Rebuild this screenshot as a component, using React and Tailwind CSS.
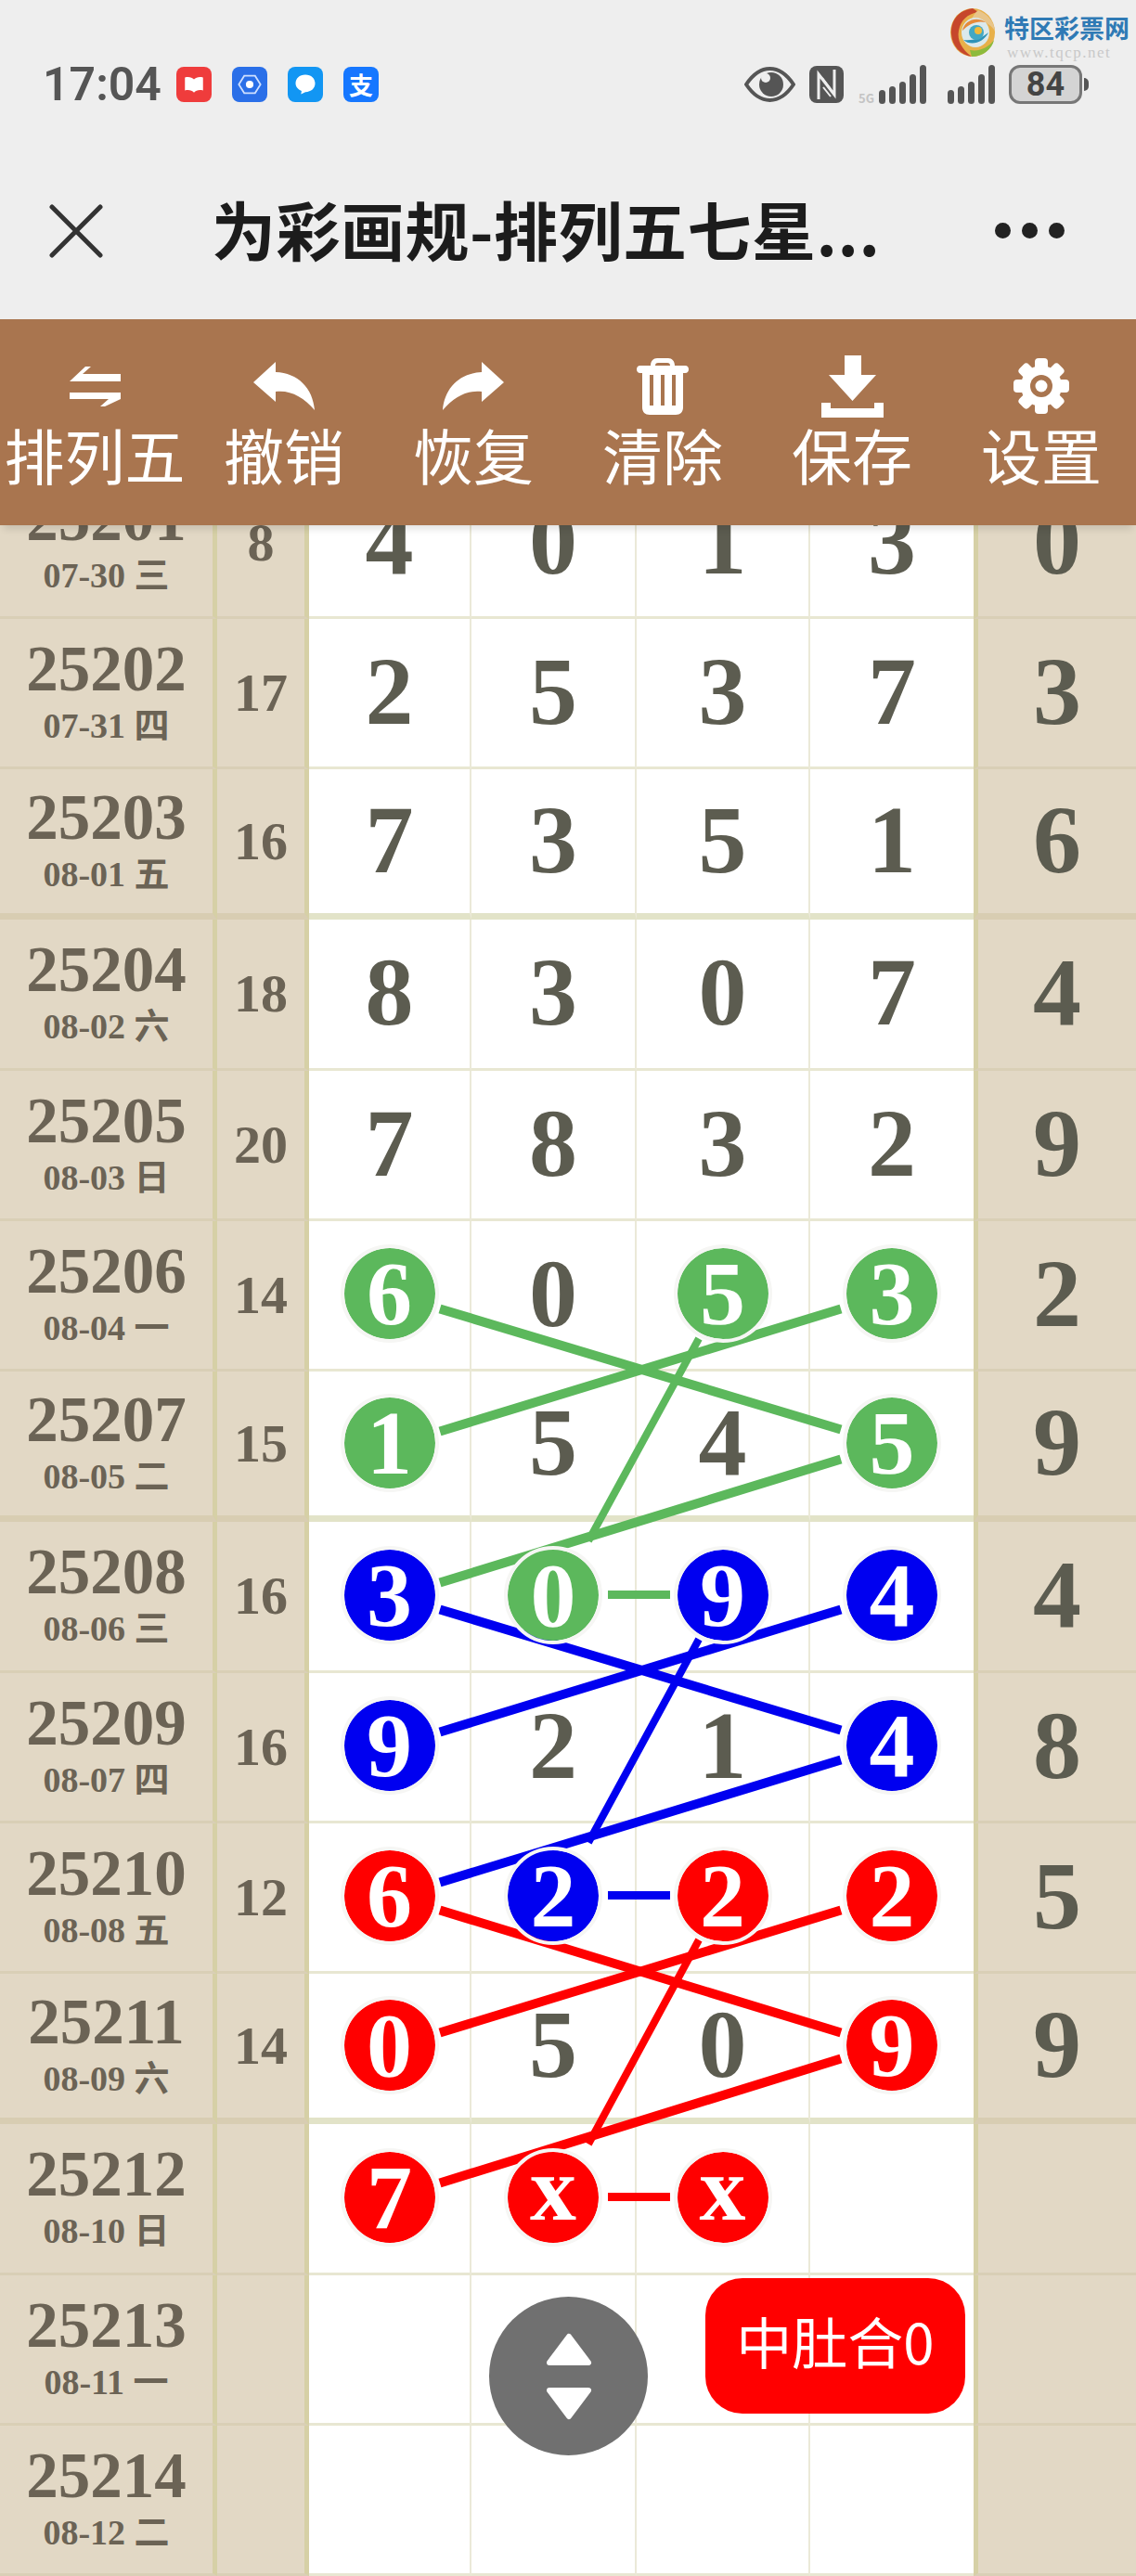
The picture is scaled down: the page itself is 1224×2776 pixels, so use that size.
import React from "react";

const ROWS = [
  { id: "25201", date: "07-30 三", sum: "8", nums: ["4", "0", "1", "3"], last: "0" },
  { id: "25202", date: "07-31 四", sum: "17", nums: ["2", "5", "3", "7"], last: "3" },
  { id: "25203", date: "08-01 五", sum: "16", nums: ["7", "3", "5", "1"], last: "6", thick: true },
  { id: "25204", date: "08-02 六", sum: "18", nums: ["8", "3", "0", "7"], last: "4" },
  { id: "25205", date: "08-03 日", sum: "20", nums: ["7", "8", "3", "2"], last: "9" },
  { id: "25206", date: "08-04 一", sum: "14", nums: ["6g", "0", "5g", "3g"], last: "2" },
  { id: "25207", date: "08-05 二", sum: "15", nums: ["1g", "5", "4", "5g"], last: "9", thick: true },
  { id: "25208", date: "08-06 三", sum: "16", nums: ["3b", "0g", "9b", "4b"], last: "4" },
  { id: "25209", date: "08-07 四", sum: "16", nums: ["9b", "2", "1", "4b"], last: "8" },
  { id: "25210", date: "08-08 五", sum: "12", nums: ["6r", "2b", "2r", "2r"], last: "5" },
  { id: "25211", date: "08-09 六", sum: "14", nums: ["0r", "5", "0", "9r"], last: "9", thick: true },
  { id: "25212", date: "08-10 日", sum: "", nums: ["7r", "xr", "xr", ""], last: "" },
  { id: "25213", date: "08-11 一", sum: "", nums: ["", "", "", ""], last: "" },
  { id: "25214", date: "08-12 二", sum: "", nums: ["", "", "", ""], last: "" },
];

const CIRCLE = { g: "bg-[#5cb85c]", b: "bg-[#0000f0]", r: "bg-[#ff0000]" };

// Line segments of the trend diagram, in page coordinates; the svg's viewBox starts at the table top.
const T = 504.5;
const LINES = [
  ["#5cb85c", 474, 1410, 906, 1540, 10],
  ["#5cb85c", 474, 1542, 906, 1410, 10],
  ["#5cb85c", 753, 1442, 634, 1660, 8],
  ["#5cb85c", 906, 1572, 474, 1705, 10],
  ["#5cb85c", 655, 1718, 722, 1718, 9],
  ["#0000f0", 474, 1734, 906, 1864, 10],
  ["#0000f0", 474, 1866, 906, 1734, 10],
  ["#0000f0", 753, 1766, 634, 1985, 8],
  ["#0000f0", 906, 1896, 474, 2028, 10],
  ["#0000f0", 655, 2042, 722, 2042, 9],
  ["#ff0000", 474, 2058, 906, 2190, 10],
  ["#ff0000", 474, 2190, 906, 2058, 10],
  ["#ff0000", 753, 2090, 634, 2310, 8],
  ["#ff0000", 906, 2218, 474, 2352, 10],
  ["#ff0000", 655, 2367, 722, 2367, 9],
];

function Cell({ v, className }) {
  const color = v.length > 1 ? v[1] : null;
  const ch = v[0] || "";
  return (
    <div className={`flex items-center justify-center h-full min-w-0 ${className}`}>
      {color ? (
        <div
          className={`relative z-10 -mt-[2px] flex h-[106px] w-[106px] items-center justify-center rounded-full border-4 border-[#f6f6f4] text-white ${CIRCLE[color]}`}
          style={{ backgroundClip: "padding-box" }}
        >
          <span className={ch === "x" ? "text-[100px] leading-none -mt-[18px]" : "text-[98px] leading-none"}>{ch}</span>
        </div>
      ) : (
        <span className="relative z-10 -mt-[3px]">{ch}</span>
      )}
    </div>
  );
}

function Row({ r }) {
  const lineB = r.thick ? "border-b-[7px] border-b-[#e2e3c8]" : "border-b-[3px] border-b-[#e8e7d2]";
  const lineL = r.thick ? "border-b-[7px] border-b-[#d8cdb2]" : "border-b-[3px] border-b-[#d9cfb6]";
  return (
    <div className="grid h-[162.25px] grid-cols-[234px_99px_175px_178px_187px_176px_175px]">
      <div className={`flex flex-col items-center justify-center bg-[#e2d8c5] border-r-[5px] border-r-[#d6d0a6] text-[#6b6355] ${lineL}`}>
        <div className="text-[69px] font-bold leading-[72px] -mt-[4px]">{r.id}</div>
        <div className="text-[38px] font-bold leading-[44px] mt-[3px] whitespace-nowrap">{r.date}</div>
      </div>
      <div className={`flex items-center justify-center bg-[#e2d8c5] border-r-[5px] border-r-[#d6d0a6] text-[58px] font-bold text-[#6b6355] ${lineL}`}>
        {r.sum}
      </div>
      {r.nums.map((n, i) => (
        <Cell
          key={i}
          v={n}
          className={`bg-white text-[104px] font-bold text-[#5c5c50] ${lineB} ${i < 3 ? "border-r-2 border-r-[#ebe9d8]" : ""}`}
        />
      ))}
      <div className={`flex items-center justify-center bg-[#e2d8c5] border-l-[5px] border-l-[#d6d0a6] text-[104px] font-bold text-[#5c5c50] ${lineL}`}>
        <span className="-mt-[3px]">{r.last}</span>
      </div>
    </div>
  );
}

const GEAR_TEETH = [0, 45, 90, 135, 180, 225, 270, 315];

const TOOLS = [
  {
    label: "排列五",
    icon: (
      <svg viewBox="0 0 55 43" className="h-[43px] w-[55px]" fill="#fff">
        <path d="M0 16 17 0h6l-9 8h41v8zM0 28h55v7L38 43h-5l9-8H0z" />
      </svg>
    ),
  },
  {
    label: "撤销",
    icon: (
      <svg viewBox="0 0 66 52" className="h-[52px] w-[66px]" fill="#fff">
        <path d="M24 0 0 22l24 21V32c16-2 30 6 42 20C64 28 48 12 24 11z" />
      </svg>
    ),
  },
  {
    label: "恢复",
    icon: (
      <svg viewBox="0 0 66 52" className="h-[52px] w-[66px]" fill="#fff">
        <path d="M42 0 66 22 42 43V32C26 30 12 38 0 52 2 28 18 12 42 11z" />
      </svg>
    ),
  },
  {
    label: "清除",
    icon: (
      <svg viewBox="0 0 56 61" className="h-[61px] w-[56px]" fill="#fff">
        <path
          fillRule="evenodd"
          d="M15 8c0-5 3-8 7-8h12c4 0 7 3 7 8h11c3 0 4 2 4 4s-1 4-4 4h-2v37c0 5-3 8-8 8H14c-5 0-8-3-8-8V16H4c-3 0-4-2-4-4s1-4 4-4zm5 0h16c0-2-1-3-3-3H23c-2 0-3 1-3 3zM14 18v33h4V18zm12 0v33h4V18zm12 0v33h4V18z"
        />
      </svg>
    ),
  },
  {
    label: "保存",
    icon: (
      <svg viewBox="0 0 67 67" className="h-[67px] w-[67px]" fill="#fff">
        <path d="M25 0h18v21h16L33.500 49 8 21h17zM0 51h10v6h47v-6h10v16H0z" />
      </svg>
    ),
  },
  {
    label: "设置",
    icon: (
      <svg viewBox="0 0 60 60" className="h-[60px] w-[60px]">
        <g fill="#fff">
          {GEAR_TEETH.map((a) => (
            <rect key={a} x="23" y="0" width="14" height="14" rx="4" transform={`rotate(${a} 30 30)`} />
          ))}
          <circle cx="30" cy="30" r="22" />
        </g>
        <circle cx="30" cy="30" r="12" fill="#a9754f" />
        <circle cx="30" cy="30" r="6.500" fill="#fff" />
      </svg>
    ),
  },
];

function AppIcon({ bg, children }) {
  return <div className={`flex h-[38px] w-[38px] items-center justify-center rounded-[8px] ${bg}`}>{children}</div>;
}

function Signal({ small }) {
  const hs = [15, 19, 24, 32, 42];
  return (
    <div className="flex items-end">
      {small && <span className="mr-[4px] w-[18px] text-[13px] font-bold leading-none text-[#c4c4c4]">5G</span>}
      <div className="flex items-end gap-[4px]">
        {hs.map((h, i) => (
          <div key={i} className="w-[7px] rounded-full bg-[#555555]" style={{ height: h }} />
        ))}
      </div>
    </div>
  );
}

function Logo() {
  return (
    <div className="absolute left-[1024px] top-[9px] flex items-start gap-[10px]">
      <svg viewBox="0 0 48 52" className="h-[52px] w-[48px]">
        <ellipse cx="24" cy="26" rx="24" ry="26" fill="#e8b04a" />
        <path d="M24 0C8 2 0 14 1 28c1 13 10 22 22 24C12 44 7 34 9 24 11 13 18 6 30 4z" fill="#c6472c" />
        <path d="M23 52c12 0 22-8 24-18-6 8-15 13-26 11z" fill="#8cbb3d" />
        <path d="M30 2c10 4 17 12 18 22-6-8-14-12-26-10 2-5 4-9 8-12z" fill="#e8c58a" />
        <ellipse cx="27" cy="26" rx="15" ry="16" fill="#dbe9ec" />
        <path d="M14 34c8 7 22 3 27-8-7 6-16 9-27 8z" fill="#2d93b8" />
        <path d="M13 24C15 13 28 8 38 15 28 13 20 17 13 24z" fill="#e58a3a" />
        <circle cx="28" cy="26" r="8" fill="#42a8c4" />
        <circle cx="30" cy="24" r="4" fill="#f0b93a" />
      </svg>
      <div className="flex flex-col">
        <div className="text-[27px] font-bold leading-[34px] mt-[4px] whitespace-nowrap text-[#2f7ab5] [font-family:'Noto_Sans_CJK_SC',sans-serif]">特区彩票网</div>
        <div className="text-[17px] leading-[16px] tracking-[1.500px] mt-[2px] ml-[3px] whitespace-nowrap text-[#c9c9c9] [font-family:'Liberation_Serif',serif]">www.tqcp.net</div>
      </div>
    </div>
  );
}

export default function App() {
  return (
    <div className="relative h-[2776px] w-[1224px] overflow-hidden bg-white [font-family:'Liberation_Serif','Noto_Sans_CJK_SC',serif]">
      {/* Status + title */}
      <header className="relative h-[344px] bg-[#eeeeee] [font-family:'Noto_Sans_CJK_SC',sans-serif]">
        <Logo />
        <div className="flex h-[182px] items-start justify-between pl-[46px] pr-[51px] pt-[70px]">
          <div className="flex items-center">
            <span className="mr-[16px] text-[50px] font-semibold leading-[42px] text-[#555555] [font-family:Roboto,sans-serif]">17:04</span>
            <div className="flex gap-[22px]">
              <AppIcon bg="bg-[#ef3c3c]">
                <svg viewBox="0 0 24 24" className="h-[26px] w-[26px]" fill="#fff"><path d="M3 5c4-1 7 0 9 2 2-2 5-3 9-2v13c-4-1-7 0-9 2-2-2-5-3-9-2z" /></svg>
              </AppIcon>
              <AppIcon bg="bg-[#2a6fe8]">
                <svg viewBox="0 0 24 24" className="h-[28px] w-[28px]" fill="none" stroke="#cfe0ff" strokeWidth="1.500"><path d="M7 4h10l5 8-5 8H7l-5-8z" /><circle cx="12" cy="12" r="3.500" fill="#fff" stroke="none" /></svg>
              </AppIcon>
              <AppIcon bg="bg-[#1296f3]">
                <svg viewBox="0 0 24 24" className="h-[28px] w-[28px]" fill="#fff"><path d="M12 3c5.500 0 9 3.500 9 8s-3.500 8-9 8l-4 2 .5-3C5 16.500 3 14 3 11c0-4.500 3.500-8 9-8z" /></svg>
              </AppIcon>
              <AppIcon bg="bg-[#1677ff]">
                <span className="text-[26px] font-bold leading-none text-white">支</span>
              </AppIcon>
            </div>
          </div>
          <div className="flex items-center">
            <svg viewBox="0 0 55 38" className="mr-[15px] h-[38px] w-[55px]">
              <path d="M2 19C10 7 18 2 27.500 2S45 7 53 19C45 31 37 36 27.500 36S10 31 2 19z" fill="none" stroke="#555" strokeWidth="4" />
              <circle cx="29" cy="19" r="13" fill="#555" />
              <circle cx="23" cy="12" r="5" fill="#eee" />
            </svg>
            <svg viewBox="0 0 37 40" className="mr-[16px] h-[40px] w-[37px]">
              <rect width="37" height="40" rx="8" fill="#555" />
              <path d="M10 36V9l17 22V4" fill="none" stroke="#eee" strokeWidth="3" />
              <path d="M15 23 23 33M14 13l9 12" fill="none" stroke="#eee" strokeWidth="2" />
            </svg>
            <div className="mr-[23px]"><Signal small /></div>
            <div className="mr-[15px]"><Signal /></div>
            <div className="flex h-[42px] w-[79px] items-center justify-center rounded-[12px] border-[3px] border-[#777777] bg-[#d4d4d4] text-[36px] font-bold leading-none text-[#444444] [font-family:Roboto,sans-serif]">84</div>
            <div className="ml-[2px] h-[14px] w-[5px] rounded-r-full bg-[#555555]" />
          </div>
        </div>
        <div className="flex h-[162px] items-center pl-[53px] pr-[77px]">
          <svg viewBox="0 0 58 58" className="mb-[28px] h-[58px] w-[58px]" fill="none" stroke="#333" strokeWidth="5" strokeLinecap="round">
            <path d="M3 3l52 52M55 3 3 55" />
          </svg>
          <div className="mb-[34px] ml-[117px] whitespace-nowrap text-[69px] font-bold leading-none tracking-[0.500px] text-[#1c1c1c]">为彩画规-排列五七星...</div>
          <div className="mb-[30px] ml-auto flex gap-[12px]">
            <div className="h-[17px] w-[17px] rounded-full bg-[#222222]" />
            <div className="h-[17px] w-[17px] rounded-full bg-[#222222]" />
            <div className="h-[17px] w-[17px] rounded-full bg-[#222222]" />
          </div>
        </div>
      </header>

      {/* Toolbar */}
      <nav className="relative z-30 grid h-[222px] grid-cols-6 bg-[#a9754f] text-white shadow-[0_8px_8px_-4px_rgba(0,0,0,0.12)] [font-family:'Noto_Sans_CJK_SC',sans-serif]">
        {TOOLS.map((t) => (
          <div key={t.label} className="flex flex-col items-center pt-[40px]">
            <div className="flex h-[64px] items-center justify-center">{t.icon}</div>
            <div className="mt-[5px] whitespace-nowrap text-[65px] leading-[72px]">{t.label}</div>
          </div>
        ))}
      </nav>

      {/* Table, scrolled beneath the toolbar */}
      <main className="relative h-[2210px] overflow-hidden">
        <div className="relative -mt-[61.5px]">
          {ROWS.map((r) => (
            <Row key={r.id} r={r} />
          ))}
          <svg className="pointer-events-none absolute left-0 top-0 z-[5] h-[2272px] w-[1224px]" viewBox={`0 ${T} 1224 2272`}>
            {LINES.map(([c, x1, y1, x2, y2, w], i) => (
              <line key={i} x1={x1} y1={y1} x2={x2} y2={y2} stroke={c} strokeWidth={w} />
            ))}
          </svg>
        </div>
        {/* Floating controls */}
        <div className="absolute left-[527px] top-[1909px] z-20 flex h-[171px] w-[171px] flex-col items-center justify-center gap-[24px] rounded-full bg-[#707070]">
          <svg viewBox="0 0 50 35" className="h-[35px] w-[50px]" fill="#fff" stroke="#fff" strokeWidth="6" strokeLinejoin="round"><path d="M25 4 46 32H4z" /></svg>
          <svg viewBox="0 0 50 35" className="h-[35px] w-[50px]" fill="#fff" stroke="#fff" strokeWidth="6" strokeLinejoin="round"><path d="M25 31 46 3H4z" /></svg>
        </div>
        <div className="absolute left-[760px] top-[1889px] z-20 flex h-[146px] w-[280px] items-center justify-center rounded-[40px] bg-[#ff0000] pb-[12px] text-[60px] text-white [font-family:'Noto_Sans_CJK_SC',sans-serif]">
          中肚合0
        </div>
      </main>
    </div>
  );
}
